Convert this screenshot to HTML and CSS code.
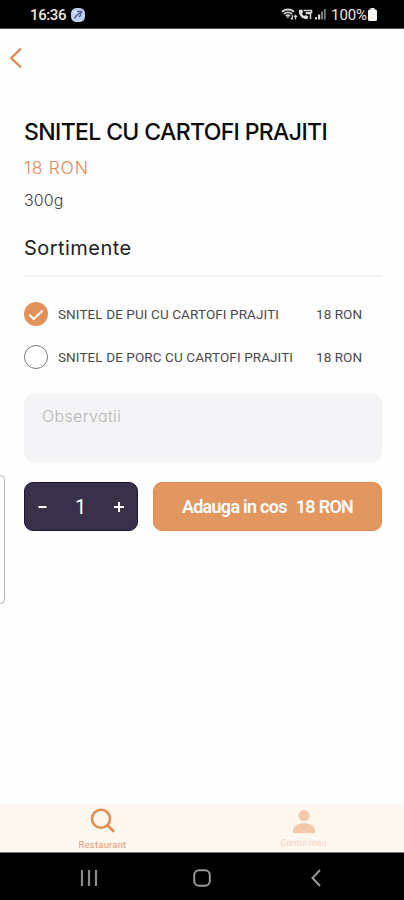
FILE: index.html
```
<!DOCTYPE html>
<html lang="ro">
<head>
<meta charset="utf-8">
<meta name="viewport" content="width=device-width, initial-scale=1">
<title>Snitel cu cartofi prajiti</title>
<link rel="stylesheet" href="styles.css">
</head>
<body>
<div class="screen">
  <header class="status">
    <span class="time">16:36</span>
    <svg class="status-app" width="14" height="14" viewBox="0 0 14 14"><rect width="14" height="14" rx="5.500" fill="#bfd0f3"/><path d="M3.500 10.500 5 8l4-3M6 3.500l4.500 0-1 3M8 9l2-2" fill="none" stroke="#4d628f" stroke-width="1.500"/><path d="M3 5l2-1.500" stroke="#fff" stroke-width="1.300"/></svg>
    <span class="status-right">
      <svg width="46" height="15" viewBox="0 0 46 15" fill="none">
        <path d="M.8 4.800Q7 .2 13.200 4.800M2.800 7Q7 3.800 11.200 7M4.700 9Q7 7.400 9 9" stroke="#d0d0d0" stroke-width="1.800"/>
        <path d="M6.800 11.500 5.500 9.600h3z" fill="#d0d0d0"/>
        <path d="M11.300 8v4.500M9.800 11l1.500 1.700M14.500 12.500V8.500M13 10l1.500-1.700 1.500 1.700" stroke="#d0d0d0" stroke-width="1.200"/>
        <path d="M18 3c-1 4.500 3 9.500 8.500 9.100l.8-2.600-2.600-1.400-1.500.9c-1.300-.7-1.800-1.500-2.200-2.700l1.200-1.200-1.200-2.600z" fill="#e0e0e0"/>
        <path d="M22.500 3.500h8v2.200h-6M25 6.500h5M29.500 7v5" stroke="#d8d8d8" stroke-width="1.500"/>
        <path d="M34 12.500h2V10h-2zM37 12.500h2.200v-5H37z" fill="#d5d5d5"/><path d="M40 12.500h2V4.500h-2zM42.800 12.500h2V2h-2z" fill="#777"/>
      </svg>
      <span class="percent">100%</span>
      <svg width="9" height="13" viewBox="0 0 9 13"><path d="M2.500 0h4v1.500H7.500Q9 1.500 9 3v8.500Q9 13 7.500 13h-6Q0 13 0 11.500V3Q0 1.500 1.500 1.500h1z" fill="#f5f5f5"/></svg>
    </span>
  </header>

  <main class="content">
    <svg class="back" width="14" height="22" viewBox="0 0 14 22"><path d="M12 1.500 2.300 11l9.700 9.500" fill="none" stroke="#df8a50" stroke-width="2.400"/></svg>
    <h1 class="title">SNITEL CU CARTOFI PRAJITI</h1>
    <p class="price">18 RON</p>
    <p class="weight">300g</p>
    <h2 class="subtitle">Sortimente</h2>
    <ul class="options">
      <li class="option">
        <svg width="24" height="24" viewBox="0 0 24 24"><circle cx="12" cy="12" r="12" fill="#e29259"/><path d="m5.300 12.700 4.500 4.300 8.700-8.500" fill="none" stroke="#fff" stroke-width="2"/></svg>
        <span class="name">SNITEL DE PUI CU CARTOFI PRAJITI</span><span class="cost">18 RON</span>
      </li>
      <li class="option">
        <svg width="24" height="24" viewBox="0 0 24 24"><circle cx="12" cy="12" r="11.500" fill="#fff" stroke="#777"/></svg>
        <span class="name">SNITEL DE PORC CU CARTOFI PRAJITI</span><span class="cost">18 RON</span>
      </li>
    </ul>
    <div class="notes">Observatii</div>
    <div class="actions">
      <div class="stepper">
        <svg width="9" height="10" viewBox="0 0 9 10"><path d="M.5 5h8" stroke="#fff" stroke-width="2"/></svg>
        <span class="qty">1</span>
        <svg width="10" height="10" viewBox="0 0 10 10"><path d="M0 5h10M5 0v10" stroke="#fff" stroke-width="2"/></svg>
      </div>
      <div class="add"><span>Adauga in cos</span><span>18 RON</span></div>
    </div>
    <div class="edge-handle"></div>
  </main>

  <nav class="tabs">
    <div class="tab">
      <svg width="26" height="26" viewBox="0 0 26 26"><circle cx="11" cy="10.700" r="9" fill="none" stroke="#df8d50" stroke-width="2.600"/><path d="m17.300 17 6.700 6.800" stroke="#df8d50" stroke-width="2.800"/></svg>
      <span class="tab-label">Restaurant</span>
    </div>
    <div class="tab tab-muted">
      <svg width="22" height="26" viewBox="0 0 22 26"><circle cx="11" cy="7.500" r="5.600" fill="#f4c9a9"/><path d="M0 25v-2.200c0-4.300 4.500-7.500 11-7.500s11 3.200 11 7.500V25z" fill="#f4c9a9"/></svg>
      <span class="tab-label">Contul meu</span>
    </div>
  </nav>
  <footer class="system">
    <svg width="18" height="18" viewBox="0 0 18 18"><path d="M2 1v16M9 1v16M16 1v16" stroke="#8c8c8c" stroke-width="2.200"/></svg>
    <svg width="18" height="18" viewBox="0 0 18 18"><rect x="1.200" y="1.200" width="15.600" height="15.600" rx="4.800" fill="none" stroke="#999" stroke-width="2"/></svg>
    <svg width="10" height="18" viewBox="0 0 10 18"><path d="M9 1 1.500 9 9 17" fill="none" stroke="#999" stroke-width="2"/></svg>
  </footer>
</div>
</body>
</html>
```

FILE: styles.css
```
* { box-sizing: border-box; }
body { margin: 0; background: #fff; font-family: Roboto, sans-serif; }
h1, h2, p, ul { margin: 0; padding: 0; font-weight: 400; }
svg { display: block; flex: none; }
.screen { width: 404px; height: 900px; display: flex; flex-direction: column; background: #fefefe; white-space: nowrap; }
.status { height: 29px; background: #000; border-bottom: 1px solid #555; display: flex; align-items: center; padding: 1px 27px 0 30px; color: #e8e8e8; }
.time { font-size: 15px; width: 41px; letter-spacing: -.4px; font-weight: 500; }
.status-right { margin-left: auto; display: flex; align-items: center; }
.percent { font-size: 15px; margin: 0 1px 0 4px; letter-spacing: -.1px; }

.content { flex: 1; position: relative; padding: 19px 22px 0 24px; display: flex; flex-direction: column; }
.back { margin: -1px 0 1px -15px; }
.title, .price, .weight, .subtitle, .notes { font-family: Inter, sans-serif; font-feature-settings: "cv11"; }
.title { margin-top: 46px; font-size: 23px; line-height: 32px; font-weight: 500; letter-spacing: -.63px; color: #0b0b0b; }
.price { margin-top: 8px; font-size: 17.500px; line-height: 24px; font-weight: 300; letter-spacing: .75px; color: #e08a59; }
.weight { margin-top: 9px; font-size: 16px; line-height: 22px; font-weight: 300; letter-spacing: .1px; color: #444; }
.subtitle { margin-top: 23px; font-size: 20px; line-height: 28px; letter-spacing: .45px; color: #222; }
.options { list-style: none; margin-top: 13px; padding-top: 25px; border-top: 2px solid #f4f4f4; display: grid; gap: 19px; }
.option { height: 24px; display: flex; align-items: center; color: #4a4a4a; font-size: 13.500px; }
.name { margin-left: 10px; width: 258px; letter-spacing: .1px; }
.cost { letter-spacing: .05px; }
.notes { margin-top: 25px; height: 68px; border-radius: 9px; background: #f4f4f6; padding: 10px 18px; font-size: 16px; line-height: 24px; letter-spacing: .35px; color: #b4b4b4; font-weight: 300; }
.actions { margin-top: 20px; display: flex; gap: 15px; height: 49px; }
.stepper { width: 114px; border-radius: 9px; background: #393149; border: 1px solid #1c153c; display: flex; align-items: center; justify-content: space-between; padding: 0 13px; }
.qty { color: #fff; font-size: 20px; }
.add { flex: 1; border-radius: 9px; background: #e29660; border: 1px solid #e28a4f; color: #fff; display: flex; align-items: center; justify-content: center; gap: 9px; font-size: 18px; font-weight: 600; letter-spacing: -.72px; }
.edge-handle { position: absolute; left: -4px; top: 446px; width: 9px; height: 129px; border: 1px solid #b5b5b5; border-radius: 5px; background: #fff; }

.tabs { height: 49px; background: #fdf7f0; border-bottom: 1px solid #777; display: grid; grid-template-columns: 1fr 1fr; padding-left: 2px; }
.tab { display: flex; flex-direction: column; align-items: center; padding-top: 4px; }
.tab-label { margin-top: 5px; font-size: 9.500px; line-height: 11px; letter-spacing: .2px; color: #e59a70; }
.tab-muted .tab-label { margin-top: 4px; font-size: 9px; letter-spacing: 0; color: #f6d3bf; }
.system { height: 47px; background: #000; display: grid; grid-template-columns: 113px 118px 10px; align-items: center; padding: 3px 83px 0 80px; }
```
